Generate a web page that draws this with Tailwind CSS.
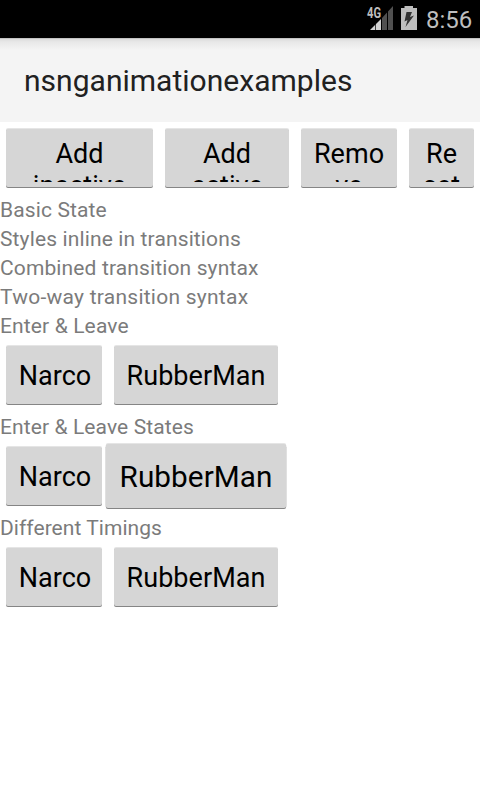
<!DOCTYPE html>
<html lang="en"><head><meta charset="utf-8"><title>nsnganimationexamples</title>
<script src="https://cdn.jsdelivr.net/npm/@tailwindcss/browser@4"></script></head>
<body class="w-[480px] h-[800px] overflow-hidden bg-white font-[Roboto,sans-serif] text-black">
<header class="h-[38px] bg-black flex items-start justify-end text-[#bebebe]">
<svg class="w-[28px] h-[38px] shrink-0" viewBox="366 0 28 38"><path d="M370 30L376 24V30Z" fill="#d2d2d2"/><path d="M376 24L381 19V30H376Z" fill="#d2d2d2"/><path d="M382 18L387 12.5V30H382ZM388 11.5L393 6V30H388Z" fill="#505050"/><path d="M375.500 24V30M381.500 18V30" stroke="#000" stroke-width=".7"/><text x="367" y="17.500" textLength="14" lengthAdjust="spacingAndGlyphs" font-family="Roboto" font-size="14" font-weight="700" fill="#bebebe" stroke="#000" stroke-width="2" paint-order="stroke">4G</text></svg>
<svg class="w-[32px] h-[38px] shrink-0" viewBox="394 0 32 38"><path d="M404.500 6H413V8H417V30H401V8H404.500Z" fill="#bebebe"/><path d="M406.500 12H412L410 17L414 15.500L405.500 27L407.500 20L404.500 21.500Z" fill="#333"/></svg>
<span class="w-[54px] text-[24px] leading-[40px] whitespace-nowrap">8:56</span>
</header>
<div class="h-[84px] bg-[#f4f4f4] bg-[linear-gradient(#aaa_0,#dcdcdc_1px,#e8e8e8_4px,#f4f4f4_12px)] px-6 pt-[2px] flex items-center"><h1 class="text-[30px] leading-[36px] font-normal text-[#212121] whitespace-nowrap tracking-[0.02px]">nsnganimationexamples</h1></div>
<main class="text-[27px] leading-[32px] tracking-[0.05px]">
<div class="h-[73px] pt-[7px] px-[6px] flex gap-3 text-center">
<button class="w-[147px] h-[58px] flex flex-col items-center pt-[9px] bg-[#d6d6d6] rounded-[2px] shadow-[0_1px_0_#858585,0_-1px_0_#e5e5e5]"><span class="block h-[44px] overflow-hidden">Add<br>inactive</span></button>
<button class="w-[124px] h-[58px] flex flex-col items-center pt-[9px] bg-[#d6d6d6] rounded-[2px] shadow-[0_1px_0_#858585,0_-1px_0_#e5e5e5]"><span class="block h-[44px] overflow-hidden">Add<br>active</span></button>
<button class="w-[96px] h-[58px] flex flex-col items-center pt-[9px] bg-[#d6d6d6] rounded-[2px] shadow-[0_1px_0_#858585,0_-1px_0_#e5e5e5]"><span class="block h-[44px] overflow-hidden">Remo<br>ve</span></button>
<button class="w-[65px] h-[58px] flex flex-col items-center pt-[9px] bg-[#d6d6d6] rounded-[2px] shadow-[0_1px_0_#858585,0_-1px_0_#e5e5e5]"><span class="block h-[44px] overflow-hidden">Re<br>set</span></button>
</div>
<div class="text-[21px] leading-[29px] tracking-[0.13px] text-[#7b7b7b]"><p class="h-[29px] pt-px">Basic State</p><p class="h-[29px] pt-px">Styles inline in transitions</p><p class="h-[29px] pt-px">Combined transition syntax</p><p class="h-[29px] pt-px tracking-[0.25px]">Two-way transition syntax</p><p class="h-[29px] pt-px">Enter &amp; Leave</p></div>
<div class="h-[72px] pt-[6px] px-[6px] flex gap-3">
<button class="w-[96px] h-[58px] pt-[2px] pl-[2px] bg-[#d6d6d6] rounded-[2px] shadow-[0_1px_0_#858585,0_-1px_0_#e5e5e5]">Narco</button><button class="w-[164px] h-[58px] pt-[2px] bg-[#d6d6d6] rounded-[2px] shadow-[0_1px_0_#858585,0_-1px_0_#e5e5e5]">RubberMan</button></div>
<p class="h-[29px] pt-px text-[21px] leading-[29px] tracking-[0.1px] text-[#7b7b7b]">Enter &amp; Leave States</p>
<div class="h-[72px] pt-[6px] px-[6px] flex gap-3">
<button class="w-[96px] h-[58px] pt-[2px] pl-[2px] bg-[#d6d6d6] rounded-[2px] shadow-[0_1px_0_#858585,0_-1px_0_#e5e5e5]">Narco</button><button class="w-[164px] h-[58px] pt-[2px] bg-[#d6d6d6] rounded-[2px] shadow-[0_1px_0_#858585,0_-1px_0_#e5e5e5] scale-110">RubberMan</button></div>
<p class="h-[29px] pt-px text-[21px] leading-[29px] tracking-[0.05px] text-[#7b7b7b]">Different Timings</p>
<div class="h-[72px] pt-[6px] px-[6px] flex gap-3">
<button class="w-[96px] h-[58px] pt-[2px] pl-[2px] bg-[#d6d6d6] rounded-[2px] shadow-[0_1px_0_#858585,0_-1px_0_#e5e5e5]">Narco</button><button class="w-[164px] h-[58px] pt-[2px] bg-[#d6d6d6] rounded-[2px] shadow-[0_1px_0_#858585,0_-1px_0_#e5e5e5]">RubberMan</button></div>
</main></body></html>
